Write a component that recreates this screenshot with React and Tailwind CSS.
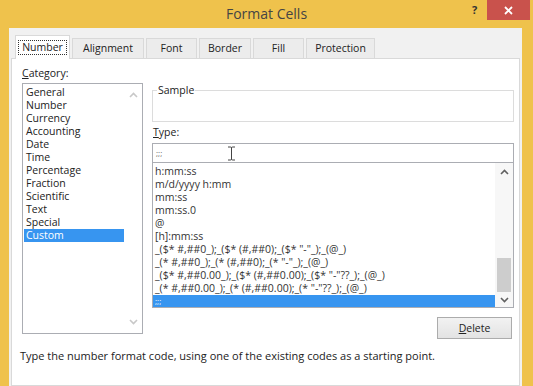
import React from "react";

const categories = [
  "General",
  "Number",
  "Currency",
  "Accounting",
  "Date",
  "Time",
  "Percentage",
  "Fraction",
  "Scientific",
  "Text",
  "Special",
  "Custom",
];

const types = [
  "h:mm:ss",
  "m/d/yyyy h:mm",
  "mm:ss",
  "mm:ss.0",
  "@",
  "[h]:mm:ss",
  '_($* #,##0_);_($* (#,##0);_($* "-"_);_(@_)',
  '_(* #,##0_);_(* (#,##0);_(* "-"_);_(@_)',
  '_($* #,##0.00_);_($* (#,##0.00);_($* "-"??_);_(@_)',
  '_(* #,##0.00_);_(* (#,##0.00);_(* "-"??_);_(@_)',
];

const tabs = [
  { name: "Number", w: "w-[55px]", active: true },
  { name: "Alignment", w: "w-[72px]" },
  { name: "Font", w: "w-[51px]" },
  { name: "Border", w: "w-[52px]" },
  { name: "Fill", w: "w-[51px]" },
  { name: "Protection", w: "w-[69px]" },
];

const Chevron = ({ up, color }) => (
  <svg width="9" height="6" viewBox="0 0 9 6">
    <polyline
      points={up ? "1,5 4.5,1.5 8,5" : "1,1 4.5,4.5 8,1"}
      fill="none"
      stroke={color}
      strokeWidth="1.6"
    />
  </svg>
);

const App = () => {
  return (
    <div className="w-[533px] h-[386px] overflow-hidden bg-[#efc24c] flex flex-col font-['Open_Sans',sans-serif] text-[10.5px] text-[#222]">
      {/* Title bar */}
      <div className="h-[28px] flex shrink-0">
        <div className="w-[71px]"></div>
        <div className="flex-1 text-center text-[14px] leading-[28px] text-[#444]">
          Format Cells
        </div>
        <div className="w-[71px] flex items-start">
          <div className="w-[25px] h-[21px] flex items-center justify-center text-[11px] font-bold text-[#333]">
            ?
          </div>
          <div className="w-[43px] h-[20px] bg-[#c9524c] flex items-center justify-center">
            <svg width="9" height="9" viewBox="0 0 9 9">
              <path d="M1 1 L8 8 M8 1 L1 8" stroke="#fff" strokeWidth="1.8" />
            </svg>
          </div>
        </div>
      </div>

      {/* Body */}
      <div className="flex-1 ml-[9px] mr-[11px] bg-[#f1f1f1] flex flex-col px-[2px]">
        {/* Tabs */}
        <div className="flex items-end gap-[2px] pl-[4px] pt-[7px] relative z-10 -mb-px">
          {tabs.map((t) =>
            t.active ? (
              <div
                key={t.name}
                className={`${t.w} h-[24px] bg-white border border-b-0 border-[#d9d9d9] flex items-center justify-center`}
              >
                <span className="border border-dotted border-[#333] px-[3px] leading-[13px]">
                  {t.name}
                </span>
              </div>
            ) : (
              <div
                key={t.name}
                className={`${t.w} h-[21px] bg-[#ececec] border border-[#d9d9d9] flex items-center justify-center`}
              >
                {t.name}
              </div>
            )
          )}
        </div>

        {/* Panel */}
        <div className="flex-1 bg-white border border-[#d9d9d9] pl-[10px] pt-[8px]">
          <div className="flex gap-[9px] items-start">
            {/* Category */}
            <div className="w-[121px]">
              <div className="leading-[13px]">
                <span className="underline">C</span>ategory:
              </div>
              <div className="mt-[3px] h-[251px] border border-[#abadb3] flex">
                <div className="flex-1 pl-[1px] pt-[2px]">
                  {categories.map((c) => (
                    <div
                      key={c}
                      className={`leading-[13px] h-[13px] pl-[2px] ${
                        c === "Custom" ? "bg-[#3795f0] text-white" : ""
                      }`}
                    >
                      {c}
                    </div>
                  ))}
                </div>
                <div className="w-[18px] flex flex-col justify-between py-[8px] items-center">
                  <Chevron up color="#c8c8c8" />
                  <Chevron color="#c8c8c8" />
                </div>
              </div>
            </div>

            {/* Right side */}
            <div className="w-[362px] pt-[17px]">
              <fieldset className="h-[38px] border border-[#dcdcdc] pl-[3px]">
                <legend className="leading-[13px] px-[1px] ml-[1px]">Sample</legend>
              </fieldset>
              <div className="mt-[4px] leading-[13px] pl-[1px]">
                <span className="underline">T</span>ype:
              </div>
              <div className="mt-[4px] h-[20px] border border-[#abadb3] flex items-center pl-[3px] relative">
                <span className="text-[8px] text-[#666] leading-none">;;;</span>
                <svg
                  className="absolute left-[74px] top-[2px]"
                  width="9"
                  height="15"
                  viewBox="0 0 9 15"
                >
                  <path
                    d="M1 1 H3.5 Q4.5 1 4.5 2 V13 Q4.5 14 3.5 14 H1 M8 1 H5.5 Q4.5 1 4.5 2 M4.5 13 Q4.5 14 5.5 14 H8"
                    fill="none"
                    stroke="#444"
                    strokeWidth="1"
                  />
                </svg>
              </div>
              <div className="h-[145px] border border-[#abadb3] border-t-0 flex">
                <div className="flex-1 pt-[2px] overflow-hidden text-[#333]">
                  {types.map((t) => (
                    <div
                      key={t}
                      className="leading-[13px] h-[13px] pl-[2px] whitespace-nowrap"
                    >
                      {t}
                    </div>
                  ))}
                  <div className="h-[12px] bg-[#3795f0] text-white text-[8px] leading-[12px] pl-[2px]">
                    ;;;
                  </div>
                </div>
                <div className="w-[18px] flex flex-col bg-[#f7f7f7]">
                  <div className="h-[17px] flex items-center justify-center">
                    <Chevron up color="#606060" />
                  </div>
                  <div className="flex-1 flex flex-col justify-end px-[2px]">
                    <div className="h-[34px] bg-[#cdcdcd]"></div>
                  </div>
                  <div className="h-[15px] flex items-center justify-center">
                    <Chevron color="#606060" />
                  </div>
                </div>
              </div>
              <div className="flex justify-end pr-[2px] mt-[9px]">
                <button className="w-[75px] h-[22px] border border-[#acacac] bg-gradient-to-b from-[#f2f2f2] to-[#e3e3e3] text-[#222] leading-none">
                  <span className="underline">D</span>elete
                </button>
              </div>
            </div>
          </div>
          <div className="mt-[10px] -ml-[2px] leading-[13px] text-[11px]">
            Type the number format code, using one of the existing codes as a
            starting point.
          </div>
        </div>
      </div>
    </div>
  );
};

export default App;
